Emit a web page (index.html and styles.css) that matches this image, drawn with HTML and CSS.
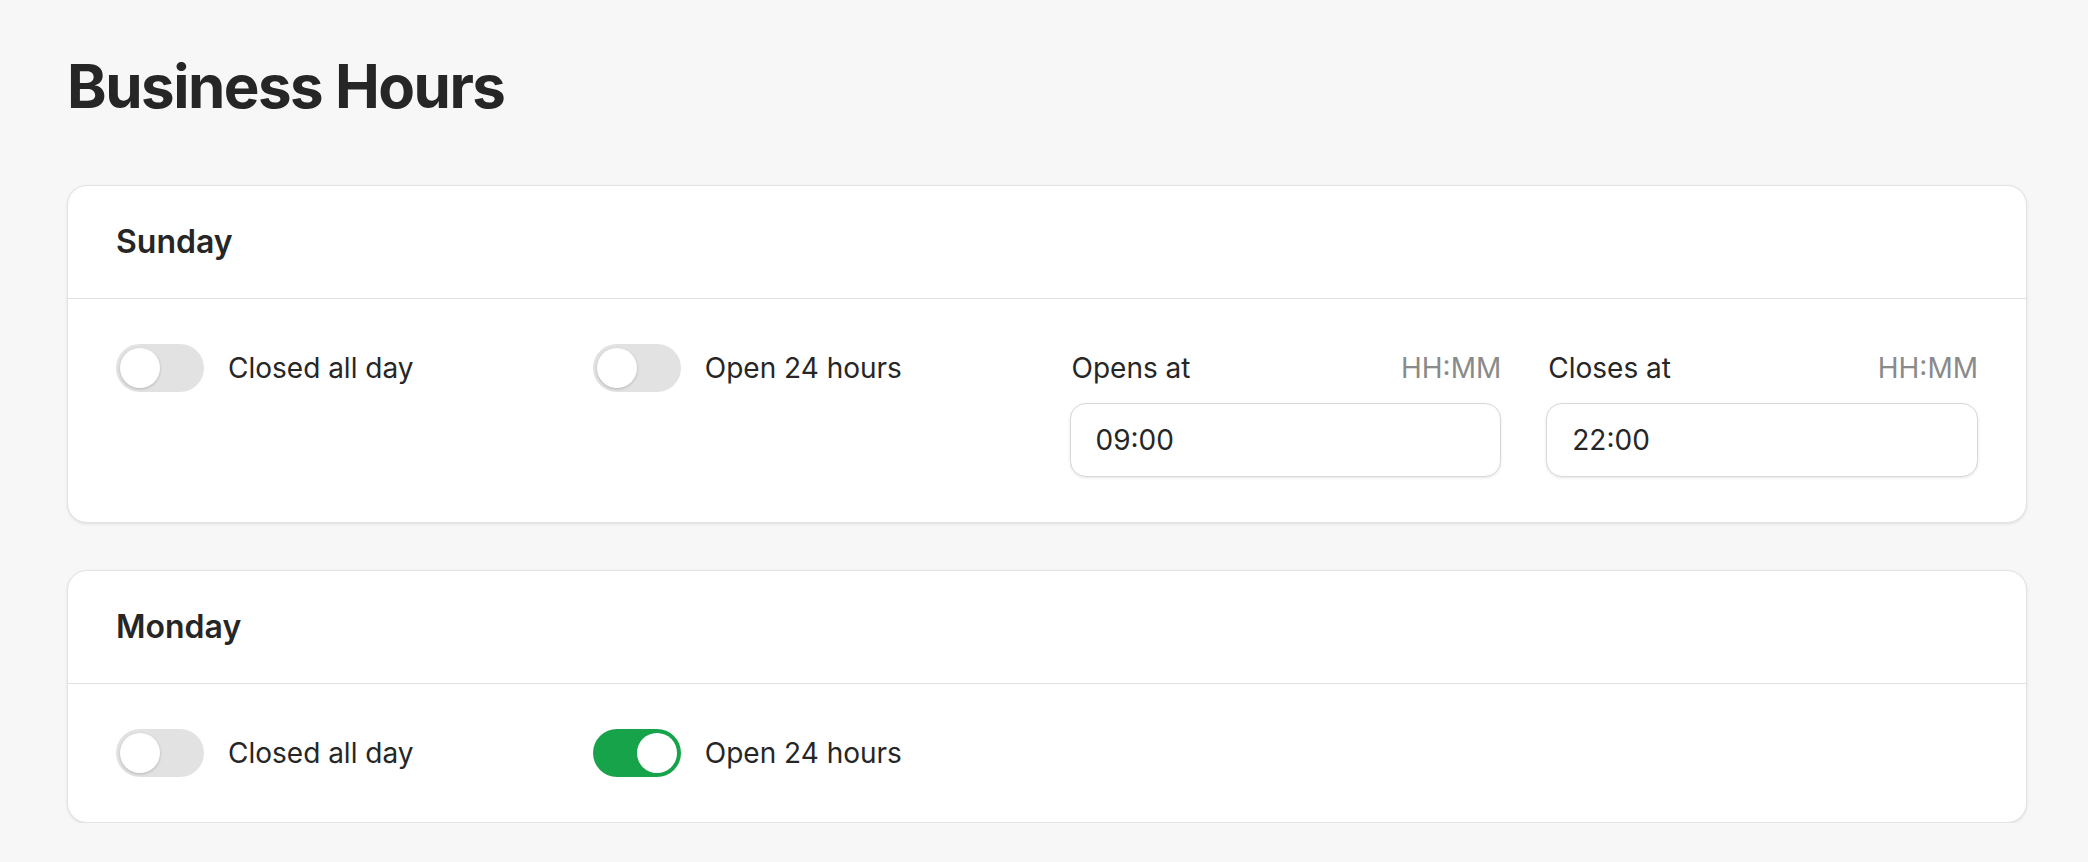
FILE: index.html
```html
<!DOCTYPE html>
<html>
<head>
	<title>Business Hours</title>
	<link rel="stylesheet" href="styles.css">
</head>
<body>
	<h1 class="page-title">Business Hours</h1>

	<section class="day-card">
		<header class="day-header">Sunday</header>
		<div class="day-body">
			<label class="toggle-row">
				<span class="toggle"><span class="knob"></span></span>
				<span class="toggle-text">Closed all day</span>
			</label>
			<label class="toggle-row">
				<span class="toggle"><span class="knob"></span></span>
				<span class="toggle-text">Open 24 hours</span>
			</label>
			<div class="time-field">
				<div class="field-label">
					<span>Opens at</span>
					<span class="hint">HH:MM</span>
				</div>
				<div class="time-input">09:00</div>
			</div>
			<div class="time-field">
				<div class="field-label">
					<span>Closes at</span>
					<span class="hint">HH:MM</span>
				</div>
				<div class="time-input">22:00</div>
			</div>
		</div>
	</section>

	<section class="day-card">
		<header class="day-header">Monday</header>
		<div class="day-body">
			<label class="toggle-row">
				<span class="toggle"><span class="knob"></span></span>
				<span class="toggle-text">Closed all day</span>
			</label>
			<label class="toggle-row">
				<span class="toggle on"><span class="knob"></span></span>
				<span class="toggle-text">Open 24 hours</span>
			</label>
		</div>
	</section>
</body>
</html>
```

FILE: styles.css
```css
body {
	margin: 0;
	padding: 50px 61px 0 67px;
	background: #f7f7f7;
	color: #262626;
	font-family: Inter, "Noto Sans", sans-serif;
	font-size: 28px;
}

.page-title {
	margin: 0 0 63px;
	font-size: 60px;
	line-height: 72px;
	font-weight: 700;
	letter-spacing: -0.025em;
}

.day-card {
	background: #fff;
	border: 1px solid #e3e3e3;
	border-radius: 20px;
	box-shadow: 0 1px 3px rgba(0, 0, 0, 0.1);
	margin-bottom: 47px;
}

.day-card:last-child {
	margin-bottom: 0;
}

.day-header {
	padding: 35px 48px;
	font-size: 32px;
	line-height: 42px;
	font-weight: 600;
	border-bottom: 1.5px solid #e0e0e0;
}

.day-body {
	display: grid;
	grid-template-columns: repeat(4, 1fr);
	column-gap: 45px;
	padding: 45px 48px;
	align-items: start;
}

.toggle-row {
	display: flex;
	align-items: center;
	gap: 24px;
	height: 48px;
	line-height: 36px;
}

.toggle {
	position: relative;
	flex: none;
	width: 88px;
	height: 48px;
	border-radius: 24px;
	background: #e2e2e2;
}

.toggle .knob {
	position: absolute;
	top: 4px;
	left: 4px;
	width: 40px;
	height: 40px;
	border-radius: 50%;
	background: #fff;
	box-shadow: 0 1px 3px rgba(0, 0, 0, 0.2);
}

.toggle.on {
	background: #16a34a;
}

.toggle.on .knob {
	left: 44px;
	box-shadow: none;
}

.field-label {
	display: flex;
	justify-content: space-between;
	align-items: center;
	height: 48px;
	line-height: 36px;
	margin-bottom: 11px;
	padding-left: 2px;
}

.hint {
	color: #8a8a8a;
}

.time-input {
	height: 74px;
	box-sizing: border-box;
	padding: 17px 25px;
	line-height: 38px;
	border: 1.5px solid #d8d8d8;
	border-radius: 16px;
	box-shadow: 0 1px 3px rgba(0, 0, 0, 0.1);
	background: #fff;
}
```
